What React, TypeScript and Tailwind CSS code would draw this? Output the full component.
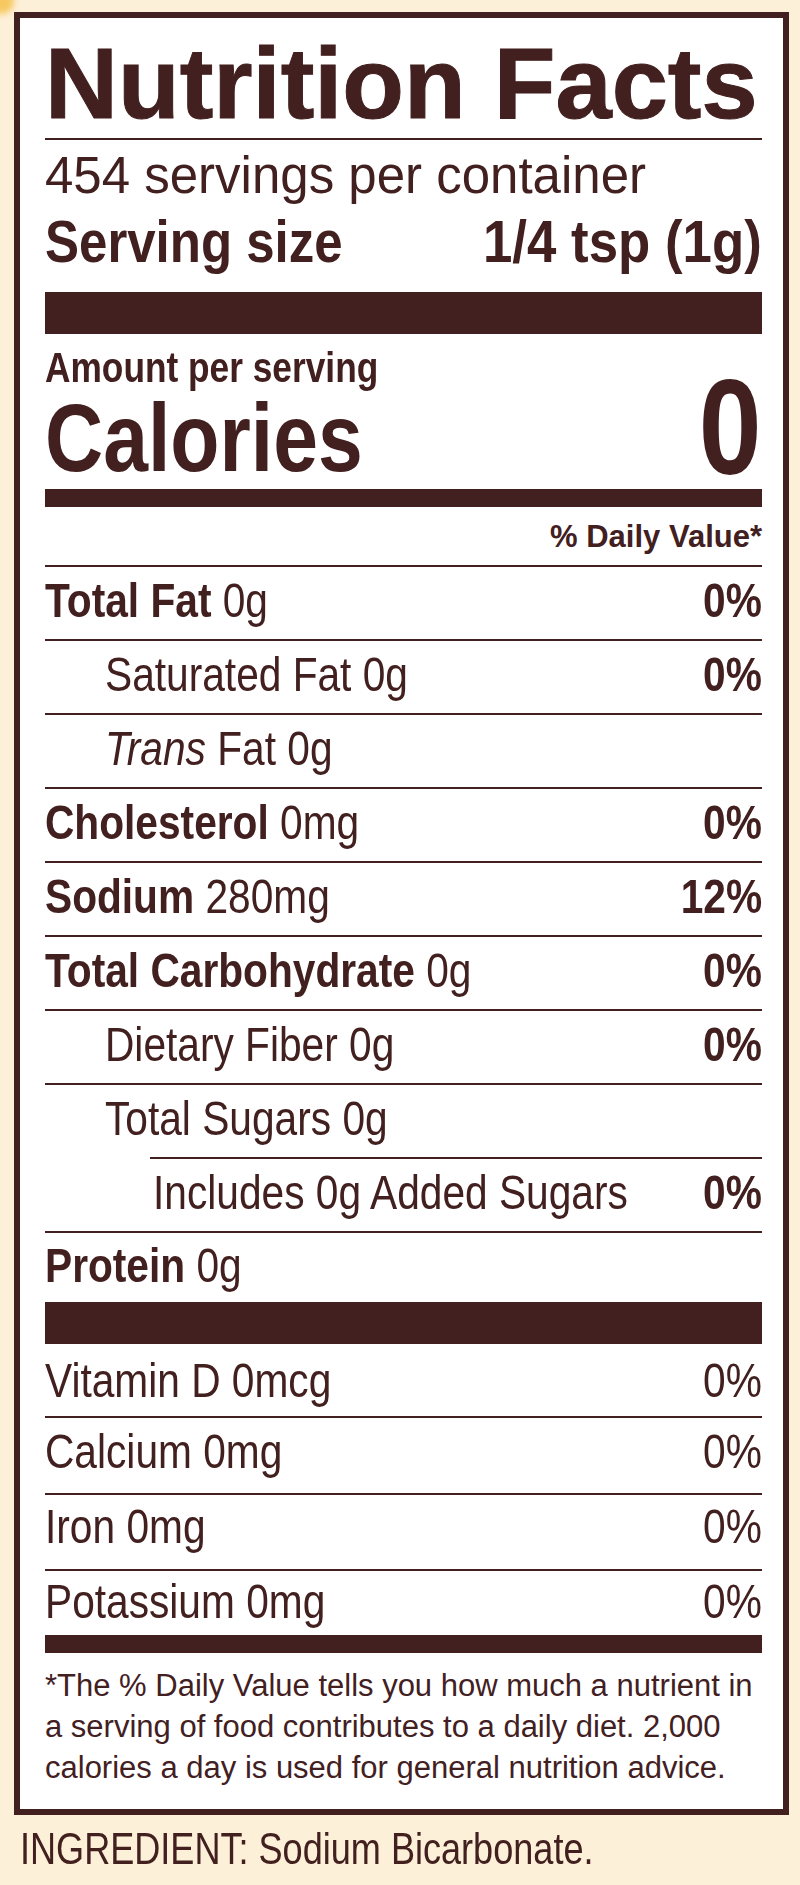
const brown = "#42201f";

type Row = {
  name: string;
  bold?: boolean;
  italic?: string;
  amount: string;
  dv?: string;
  indent?: boolean;
};

const nutrients: Row[] = [
  { name: "Total Fat", bold: true, amount: "0g", dv: "0%" },
  { name: "Saturated Fat", amount: "0g", dv: "0%", indent: true },
  { name: "Fat", italic: "Trans", amount: "0g", indent: true },
  { name: "Cholesterol", bold: true, amount: "0mg", dv: "0%" },
  { name: "Sodium", bold: true, amount: "280mg", dv: "12%" },
  { name: "Total Carbohydrate", bold: true, amount: "0g", dv: "0%" },
  { name: "Dietary Fiber", amount: "0g", dv: "0%", indent: true },
  { name: "Total Sugars", amount: "0g", indent: true },
];

const vitamins = [
  { label: "Vitamin D 0mcg", cls: "h-[72px]" },
  { label: "Calcium 0mg", cls: "h-[77px] border-t-2 pb-[8px]" },
  { label: "Iron 0mg", cls: "h-[76px] border-t-2 pb-[12px]" },
  { label: "Potassium 0mg", cls: "h-[66px] border-t-2 pb-[4px]" },
];

// no narrow face is installed, so squeeze Liberation Sans sideways
function Narrow({ children, right, className = "" }: { children: React.ReactNode; right?: boolean; className?: string }) {
  return (
    <span
      className={`inline-block min-w-0 whitespace-nowrap scale-x-[0.83] ${right ? "shrink-0 origin-right" : "origin-left"} ${className}`}
    >
      {children}
    </span>
  );
}

function NutrientRow({ row }: { row: Row }) {
  return (
    <div
      className={`flex h-[74px] items-center justify-between border-t-2 border-[#42201f] pb-[6px] ${
        row.indent ? "pl-[60px]" : ""
      }`}
    >
      <Narrow>
        {row.italic && <span className="italic">{row.italic} </span>}
        <span className={row.bold ? "font-bold" : ""}>{row.name}</span> {row.amount}
      </Narrow>
      {row.dv && (
        <Narrow right className="font-bold">
          {row.dv}
        </Narrow>
      )}
    </div>
  );
}

export default function App() {
  return (
    <div
      className="relative min-h-screen w-full overflow-hidden bg-[#fdf0d8] pt-[12px] pb-[15px] text-[#42201f]"
      style={{ color: brown, fontFamily: '"Liberation Sans", Arial, sans-serif' }}
    >
      {/* little yellow glow in the corner */}
      <div className="pointer-events-none absolute -left-[12px] -top-[12px] h-[26px] w-[26px] rounded-full bg-[#f6c453] opacity-90 blur-[3px]" />

      <div className="ml-[14px] w-[775px] border-[6px] border-[#42201f] bg-white pl-[25px] pr-[21px] pb-[21px]">
        <h1 className="mt-[15px] whitespace-nowrap text-[101px] font-bold leading-[101px] [-webkit-text-stroke:1px_#42201f]">
          Nutrition Facts
        </h1>
        <div className="mt-[4px] h-[2px] bg-[#42201f]" />

        <p className="mt-[10px] whitespace-nowrap text-[51px] leading-[51px]">454 servings per container</p>
        <div className="mt-[11px] flex h-[60px] items-center justify-between text-[60px] font-bold leading-[60px]">
          <Narrow className="!scale-x-[0.85]">Serving size</Narrow>
          <span className="inline-block shrink-0 origin-right scale-x-[0.88] whitespace-nowrap">1/4 tsp (1g)</span>
        </div>

        <div className="mt-[20px] h-[42px] bg-[#42201f]" />

        <div className="mt-[13px] flex items-end justify-between font-bold">
          <div className="min-w-0">
            <p className="text-[42px] leading-[42px]">
              <Narrow className="!scale-x-[0.84]">Amount per serving</Narrow>
            </p>
            <p className="text-[97px] leading-[97px]">
              <Narrow>Calories</Narrow>
            </p>
          </div>
          <Narrow right className="text-[136px] leading-[118px]">
            0
          </Narrow>
        </div>

        <div className="mt-[3px] h-[18px] bg-[#42201f]" />

        <div className="flex h-[58px] items-center justify-end text-[31px] font-bold leading-[31px]">% Daily Value*</div>

        <div className="text-[49px] leading-[49px]">
          {nutrients.map((r) => (
            <NutrientRow key={r.name} row={r} />
          ))}
          <div className="ml-[105px] flex h-[74px] items-center justify-between border-t-2 border-[#42201f] pb-[6px] pl-[3px]">
            <Narrow>Includes 0g Added Sugars</Narrow>
            <Narrow right className="font-bold">
              0%
            </Narrow>
          </div>
          <div className="flex h-[71px] items-center border-t-2 border-[#42201f] pb-[4px]">
            <Narrow>
              <span className="font-bold">Protein</span> 0g
            </Narrow>
          </div>

          <div className="h-[42px] bg-[#42201f]" />

          {vitamins.map((v) => (
            <div key={v.label} className={`flex items-center justify-between border-[#42201f] ${v.cls}`}>
              <Narrow>{v.label}</Narrow>
              <Narrow right>0%</Narrow>
            </div>
          ))}
        </div>

        <div className="h-[18px] bg-[#42201f]" />

        <p className="mt-[12px] whitespace-nowrap text-[31px] leading-[41px]">
          *The % Daily Value tells you how much a nutrient in
          <br />
          a serving of food contributes to a daily diet. 2,000
          <br />
          calories a day is used for general nutrition advice.
        </p>
      </div>

      <p className="mt-[12px] ml-[20px] text-[44px] leading-[44px]">
        <Narrow className="!scale-x-[0.82]">INGREDIENT: Sodium Bicarbonate.</Narrow>
      </p>
    </div>
  );
}
